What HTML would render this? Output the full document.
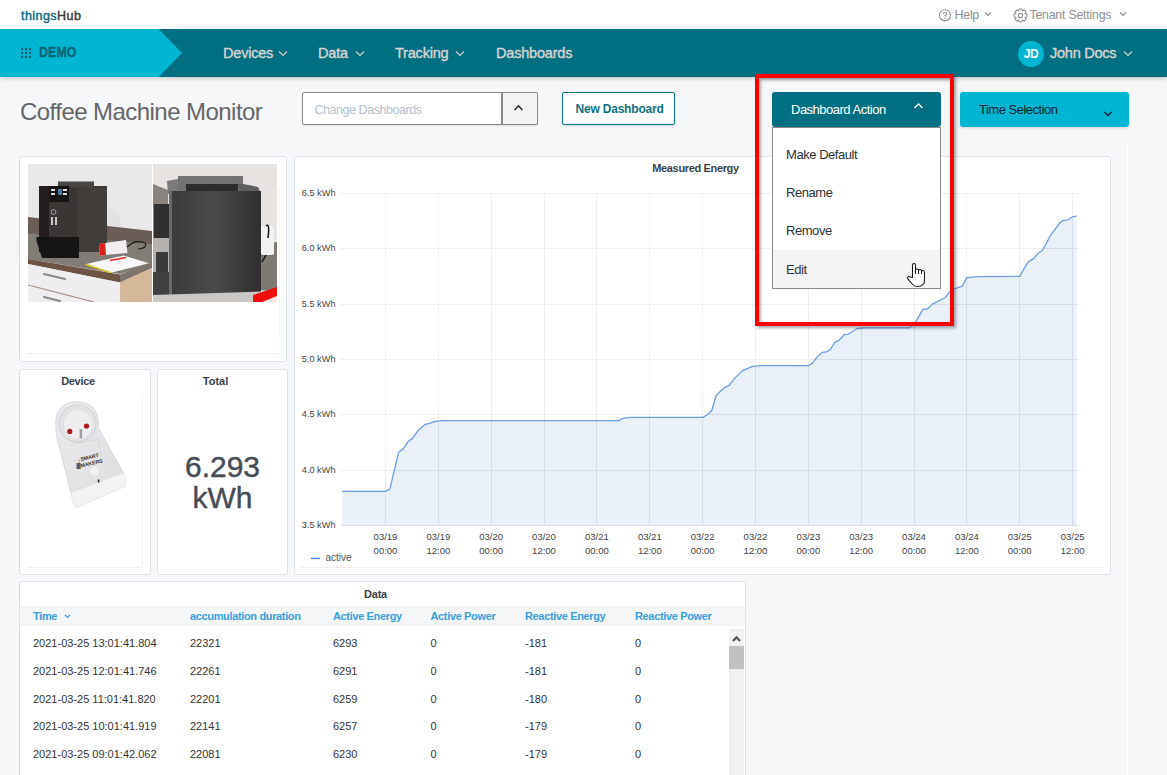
<!DOCTYPE html>
<html><head><meta charset="utf-8">
<style>
*{box-sizing:border-box;margin:0;padding:0}
html,body{width:1167px;height:775px;overflow:hidden}
body{background:#f5f7f9;font-family:"Liberation Sans",sans-serif;position:relative;color:#333}
.abs{position:absolute;white-space:nowrap}
#topbar{position:absolute;left:0;top:0;width:1167px;height:29px;background:#fff}
#nav{position:absolute;left:0;top:29px;width:1167px;height:48px;background:#006f84;box-shadow:0 2px 4px rgba(0,0,0,.17)}
.navtxt{position:absolute;top:0;line-height:48px;font-size:14.5px;color:#d8d6d1;font-weight:400;letter-spacing:-0.2px;-webkit-text-stroke:0.35px #d8d6d1}
.card{position:absolute;background:#fff;border:1px solid #dde2e8;border-radius:3px}
.cardtitle{position:absolute;left:0;right:0;text-align:center;font-size:11px;font-weight:700;color:#3a3f47}
</style></head>
<body>
<!-- top bar -->
<div id="topbar">
  <div class="abs" style="left:21px;top:9px;font-size:12.5px;font-weight:400;letter-spacing:0.45px;line-height:15px;-webkit-text-stroke:0.45px currentColor"><span style="color:#0d6c80">things</span><span style="color:#3c3c3c">Hub</span></div>
  <!-- help -->
  <svg class="abs" style="left:938px;top:9px" width="14" height="13" viewBox="0 0 14 13"><circle cx="7" cy="6.3" r="5.6" fill="none" stroke="#8f8f8f" stroke-width="1.1"/><path d="M5.2 5 Q5.2 3.3 7 3.3 Q8.8 3.3 8.8 4.8 Q8.8 5.8 7.4 6.3 L7 6.7 V7.5" fill="none" stroke="#8f8f8f" stroke-width="1.1"/><circle cx="7" cy="9.2" r="0.7" fill="#8f8f8f"/></svg>
  <div class="abs" style="left:954.5px;top:8px;font-size:12.5px;color:#8f8f8f;line-height:15px;letter-spacing:-0.3px">Help</div>
  <svg class="abs" style="left:984px;top:11px" width="8" height="6" viewBox="0 0 8 6"><path d="M1 1.5 L4 4.5 L7 1.5" fill="none" stroke="#8f8f8f" stroke-width="1.2"/></svg>
  <svg class="abs" style="left:1013px;top:8px" width="15" height="15" viewBox="0 0 15 15"><g fill="none" stroke="#8f8f8f" stroke-width="1.1" stroke-linejoin="round"><path d="M12.09 5.77 L13.94 6.06 L13.94 8.94 L12.09 9.23 L11.96 9.52 L13.07 11.04 L11.04 13.07 L9.52 11.96 L9.23 12.09 L8.94 13.94 L6.06 13.94 L5.77 12.09 L5.48 11.96 L3.96 13.07 L1.93 11.04 L3.04 9.52 L2.91 9.23 L1.06 8.94 L1.06 6.06 L2.91 5.77 L3.04 5.48 L1.93 3.96 L3.96 1.93 L5.48 3.04 L5.77 2.91 L6.06 1.06 L8.94 1.06 L9.23 2.91 L9.52 3.04 L11.04 1.93 L13.07 3.96 L11.96 5.48 Z"/><circle cx="7.5" cy="7.5" r="2.1"/></g></svg>
  <div class="abs" style="left:1029.5px;top:8px;font-size:12.3px;color:#8f8f8f;line-height:15px;letter-spacing:-0.2px">Tenant Settings</div>
  <svg class="abs" style="left:1119px;top:11px" width="8" height="6" viewBox="0 0 8 6"><path d="M1 1.5 L4 4.5 L7 1.5" fill="none" stroke="#8f8f8f" stroke-width="1.2"/></svg>
</div>

<!-- nav -->
<div id="nav">
  <svg class="abs" style="left:0;top:0" width="183" height="48" viewBox="0 0 183 48"><path d="M0 0 H158.5 L182 24 L158.5 48 H0 Z" fill="#00b6d3"/></svg>
  <svg class="abs" style="left:21px;top:19px" width="10" height="10" viewBox="0 0 10 10" fill="#0a6476"><rect x="0" y="0" width="2.2" height="2.2"/><rect x="3.9" y="0" width="2.2" height="2.2"/><rect x="7.8" y="0" width="2.2" height="2.2"/><rect x="0" y="3.9" width="2.2" height="2.2"/><rect x="3.9" y="3.9" width="2.2" height="2.2"/><rect x="7.8" y="3.9" width="2.2" height="2.2"/><rect x="0" y="7.8" width="2.2" height="2.2"/><rect x="3.9" y="7.8" width="2.2" height="2.2"/><rect x="7.8" y="7.8" width="2.2" height="2.2"/></svg>
  <div class="abs" style="left:39px;top:-1px;line-height:48px;font-size:15px;font-weight:700;color:#0a6476;letter-spacing:0.2px;transform:scaleX(0.82);transform-origin:0 0;-webkit-text-stroke:0.3px #0a6476">DEMO</div>
  <div class="navtxt" style="left:223px">Devices</div>
  <svg class="abs" style="left:278px;top:21px" width="10" height="7" viewBox="0 0 10 7"><path d="M1 1.5 L5 5.5 L9 1.5" fill="none" stroke="#cfd6d6" stroke-width="1.1"/></svg>
  <div class="navtxt" style="left:318px">Data</div>
  <svg class="abs" style="left:355px;top:21px" width="10" height="7" viewBox="0 0 10 7"><path d="M1 1.5 L5 5.5 L9 1.5" fill="none" stroke="#cfd6d6" stroke-width="1.1"/></svg>
  <div class="navtxt" style="left:395px">Tracking</div>
  <svg class="abs" style="left:455px;top:21px" width="10" height="7" viewBox="0 0 10 7"><path d="M1 1.5 L5 5.5 L9 1.5" fill="none" stroke="#cfd6d6" stroke-width="1.1"/></svg>
  <div class="navtxt" style="left:496px">Dashboards</div>
  <div class="abs" style="left:1018px;top:12px;width:26px;height:26px;border-radius:50%;background:#00b6d3;color:#fff;font-size:12px;font-weight:700;text-align:center;line-height:26px;letter-spacing:-0.5px">JD</div>
  <div class="navtxt" style="left:1050px;letter-spacing:-0.25px">John Docs</div>
  <svg class="abs" style="left:1123px;top:21px" width="10" height="7" viewBox="0 0 10 7"><path d="M1 1.5 L5 5.5 L9 1.5" fill="none" stroke="#cfd6d6" stroke-width="1.1"/></svg>
</div>

<!-- title row -->
<div class="abs" style="left:20px;top:98px;font-size:24px;color:#666;letter-spacing:-0.55px;line-height:28px">Coffee Machine Monitor</div>

<div class="abs" style="left:302px;top:92px;width:236px;height:33px;border:1px solid #8a8a8a;border-radius:2px;background:#fff;box-shadow:0 1px 2px rgba(0,0,0,.1)"></div>
<div class="abs" style="left:501px;top:92px;width:37px;height:33px;border:1px solid #8a8a8a;border-left:2px solid #8a8a8a;border-radius:0 2px 2px 0;background:#f4f4f4"></div>
<div class="abs" style="left:314.5px;top:102px;font-size:12.5px;color:#b4c0cc;letter-spacing:-0.45px;line-height:16px">Change Dashboards</div>
<svg class="abs" style="left:513px;top:104px" width="11" height="8" viewBox="0 0 11 8"><path d="M1.5 6 L5.5 2 L9.5 6" fill="none" stroke="#333" stroke-width="1.6"/></svg>

<div class="abs" style="left:562px;top:92px;width:113px;height:33px;border:1.5px solid #0c7185;border-radius:2px;background:#fff;box-shadow:0 1px 3px rgba(0,0,0,.12)"></div>
<div class="abs" style="left:575.5px;top:102px;font-size:12px;font-weight:700;color:#0c7185;letter-spacing:-0.2px;line-height:15px">New Dashboard</div>

<!-- time selection -->
<div class="abs" style="left:960px;top:92px;width:169px;height:35px;border-radius:3px;background:#00b6d3;box-shadow:0 1px 3px rgba(0,0,0,.15)"></div>
<div class="abs" style="left:979px;top:102px;font-size:13px;color:#102028;letter-spacing:-0.5px;line-height:15px">Time Selection</div>
<svg class="abs" style="left:1102.5px;top:109.5px" width="10" height="8" viewBox="0 0 10 8"><path d="M1.5 2 L5 5.5 L8.5 2" fill="none" stroke="#102028" stroke-width="1.4"/></svg>

<!-- faint vertical line -->
<div class="abs" style="left:1127px;top:143px;width:1px;height:632px;background:#ffffff"></div>

<!-- CARDS -->
<div class="card" id="imgcard" style="left:19px;top:156px;width:268px;height:206px">
<svg class="abs" style="left:-1px;top:-1px" width="268" height="206" viewBox="19 156 268 206">
<defs>
<linearGradient id="bodyg" x1="0" x2="1" y1="0" y2="0"><stop offset="0" stop-color="#3b3b3b"/><stop offset="0.5" stop-color="#4a4a4a"/><stop offset="1" stop-color="#2f2f2f"/></linearGradient>
<clipPath id="c1"><rect x="28" y="164" width="124" height="138"/></clipPath>
<clipPath id="c2"><rect x="153" y="164" width="124" height="138"/></clipPath>
</defs>
<g clip-path="url(#c1)">
<rect x="28" y="164" width="124" height="138" fill="#e8e8e9"/>
<polygon points="106,205 118,215 122,227 106,226" fill="#dcdcde" opacity="0.5"/>
<polygon points="28,217 152,231 152,246 28,234" fill="#6a5d57"/>
<polygon points="28,234 152,244 152,264 120,274 28,259" fill="#827c77"/>
<polygon points="28,259 120,274.5 120,282.5 28,264" fill="#6d5445"/>
<polygon points="120,274.5 152,262 152,268 120,282.5" fill="#7d746c"/>
<polygon points="28,264 120,282.5 120,302 28,302" fill="#eeedf0"/>
<polygon points="120,282.5 152,268 152,302 120,302" fill="#d3b89c"/>
<path d="M28 285 L94 302" stroke="#a88d80" stroke-width="1.2"/>
<path d="M44 274 L65 279" stroke="#8f8a8c" stroke-width="2.2" stroke-linecap="round"/>
<path d="M44 297 L60 301" stroke="#8f8a8c" stroke-width="2.2" stroke-linecap="round"/>
<polygon points="39,186 107,186 107,252 39,252" fill="#3a3634"/>
<rect x="39" y="186" width="10" height="66" fill="#231f20"/>
<rect x="58" y="181.5" width="36" height="6" fill="#4a4543"/>
<rect x="49" y="186" width="20" height="16" fill="#161414"/>
<rect x="51" y="189" width="4" height="2" fill="#ddd"/>
<rect x="51" y="193" width="4" height="2" fill="#ddd"/>
<rect x="58" y="189" width="4" height="6" fill="#4a78a0"/>
<rect x="63" y="189" width="4" height="2" fill="#ddd"/>
<rect x="63" y="193" width="4" height="2" fill="#ddd"/>
<rect x="77" y="187" width="30" height="65" fill="#403d3b"/>
<circle cx="53.5" cy="212" r="2.4" fill="none" stroke="#bbb" stroke-width="0.8"/>
<rect x="51" y="217" width="2" height="8" fill="#c8c8c8"/>
<rect x="55" y="217" width="2" height="8" fill="#c8c8c8"/>
<polygon points="36.5,237 79,237 79,258 42,258 36.5,241" fill="#161515"/>
<polygon points="99,244 126,240 127.5,253 100,255.5" fill="#f0eeee"/>
<polygon points="99,244 105,243 106,255 100,255.5" fill="#e01d1d"/>
<path d="M127 247 Q136 239 145 243 Q148 248 138 249" fill="none" stroke="#1e1e1e" stroke-width="1.1"/>
<polygon points="86.4,264 123.6,255.4 149,263.3 112,272.4" fill="#f7f7f7"/>
<polygon points="86.4,264 112,272.4 110,273 85,265" fill="#e3d20a"/>
<path d="M110 260.5 L126 257.5" stroke="#e22" stroke-width="1.6"/>
</g>
<rect x="152" y="164" width="1" height="138" fill="#ffffff"/>
<g clip-path="url(#c2)">
<rect x="153" y="164" width="124" height="138" fill="#e6e3e0"/>
<polygon points="153,184 168,190 168,240 153,238" fill="#8a8480"/>
<rect x="153" y="238" width="19" height="36" fill="#b4b1ae"/>
<rect x="156" y="252" width="12" height="20" fill="#3a3a3a"/>
<rect x="154" y="204" width="16" height="34" fill="#303030"/>
<rect x="153" y="272" width="21" height="23" fill="#404040"/>
<polygon points="167,181 183,178 185,192 168,194" fill="#7c7a78"/>
<rect x="178" y="176" width="65" height="16" fill="#757371"/>
<rect x="186" y="184" width="52" height="8" fill="#2d2d2d"/>
<polygon points="238,183 258,187 261,194 240,194" fill="#605e5d"/>
<rect x="169" y="191" width="92" height="104" fill="url(#bodyg)"/>
<rect x="169" y="191" width="3" height="104" fill="#6a6a6a"/>
<polygon points="261,244 277,242 277,292 261,290" fill="#7f7974"/>
<rect x="261" y="226" width="13" height="29" rx="2" fill="#f2f2f2"/>
<path d="M266 255 L262 262 M266 226 Q270 222 268 238" stroke="#111" stroke-width="1.5" fill="none"/>
<polygon points="153,295 277,291 277,302 153,302" fill="#cbc7c4"/>
<polygon points="253,302 253,295 277,287 277,302" fill="#f20d0d"/>
<polygon points="262,302 277,296 277,302" fill="#f3e3e3"/>
</g>
<path d="M279.5 187V336" stroke="#f1f2f4" stroke-width="1"/>
<path d="M27 353.5H279" stroke="#eceef0" stroke-width="1"/>
</svg>
</div>
<div class="card" style="left:19px;top:369px;width:132px;height:206px"><div class="cardtitle" style="top:5px;left:-14px;letter-spacing:-0.3px">Device</div>
<svg class="abs" style="left:-1px;top:-1px" width="132" height="206" viewBox="19 369 132 206">
<defs>
<linearGradient id="plugg" x1="0" x2="1" y1="0" y2="1"><stop offset="0" stop-color="#ececee"/><stop offset="1" stop-color="#dcdcdf"/></linearGradient>
</defs>
<path d="M142.5 397V567.5M27 567.5H142" stroke="#eef0f2" stroke-width="1"/>
<path d="M56 428 Q54 410 66 404 Q78 399 90 405 Q99 411 98.5 428 L124 474 Q127 480 125.5 486 L78 507 Q74.5 508 73.5 503 L56.5 436 Z" fill="url(#plugg)" stroke="#d2d2d6" stroke-width="0.8"/>
<path d="M71 493 L123.5 473 Q127 479 125.5 486 L78 507 Q74.5 508 73.5 503 Z" fill="#f3f3f5"/>
<circle cx="77.5" cy="423.5" r="18.5" fill="#e3e3e6" stroke="#cfcfd3" stroke-width="1"/>
<circle cx="78" cy="424.5" r="14" fill="#eeeef0"/>
<circle cx="69.8" cy="431.4" r="2.6" fill="#a81c1c"/>
<circle cx="86.5" cy="426" r="2.6" fill="#a81c1c"/>
<rect x="79.6" y="429" width="2.6" height="9.5" rx="1.2" fill="#a0a0a4"/>
<path d="M71 444.5 L98.5 439 L101 455 L73.5 461" fill="none" stroke="#d4d4d8" stroke-width="0.7"/>
<polygon points="77,469 79.5,458 81,469" fill="#e0b81a"/>
<rect x="76.5" y="463" width="4" height="6" fill="#5a5a6a"/>
<text x="81" y="461" font-size="5.2" font-weight="700" fill="#333" font-family="Liberation Sans" transform="rotate(-13 81 461)">SMART</text>
<text x="81" y="467.5" font-size="5.2" font-weight="700" fill="#333" font-family="Liberation Sans" transform="rotate(-13 81 467.5)">MAKERS</text>
<circle cx="94.6" cy="471" r="5.3" fill="#f0f0f2" stroke="#d8d8dc" stroke-width="0.6"/>
<rect x="97.8" y="479.5" width="1.6" height="3" fill="#222"/>
</svg>
</div>
<div class="card" style="left:157px;top:369px;width:131px;height:206px"><div class="cardtitle" style="top:5px;left:-14px">Total</div>
  <div class="abs" style="left:0;width:129px;top:81px;text-align:center;font-size:30px;line-height:31px;color:#454c55;font-weight:400;letter-spacing:0px;-webkit-text-stroke:0.4px #454c55">6.293<br>kWh</div>
</div>
<div class="card" id="chartcard" style="left:294px;top:156px;width:817px;height:419px">
<!--CHART-->
<svg class="abs" style="left:-1px;top:-1px" width="817" height="419" viewBox="294 156 817 419">
<path d="M339.5 193.4H1079 M339.5 248.7H1079 M339.5 304.1H1079 M339.5 359.4H1079 M339.5 414.7H1079 M339.5 470.0H1079 M339.5 525.4H1079 M385.5 193.4V525.4 M438.4 193.4V525.4 M491.2 193.4V525.4 M544.0 193.4V525.4 M596.9 193.4V525.4 M649.8 193.4V525.4 M702.6 193.4V525.4 M755.5 193.4V525.4 M808.3 193.4V525.4 M861.2 193.4V525.4 M914.0 193.4V525.4 M966.9 193.4V525.4 M1019.7 193.4V525.4 M1072.6 193.4V525.4" stroke="#efefef" stroke-width="1" fill="none" shape-rendering="crispEdges"/>
<clipPath id="fillclip"><polygon points="342,526 342.0,491.4 385.6,491.4 389.8,489.1 398.6,452.3 402.8,449.4 408.4,441.2 412.3,438.6 418.1,430.5 425.3,424.3 429.5,423.3 435.1,421.4 442.6,420.7 618.4,420.7 624.0,418.1 629.8,417.4 703.1,417.4 708.0,414.2 711.9,410.3 716.0,395.8 720.1,391.4 725.0,387.3 729.4,385.1 734.5,378.4 742.3,370.9 752.4,366.4 760.2,365.7 808.1,365.7 812.5,363.1 817.6,356.4 822.1,352.4 826.6,351.9 830.3,349.5 834.8,342.3 839.3,340.1 844.4,334.5 848.2,334.1 851.5,332.3 857.1,328.5 864.9,327.9 909.4,327.9 916.3,320.9 923.1,309.2 927.1,309.2 932.5,304.1 945.2,297.5 949.7,292.0 954.2,289.0 962.3,286.1 966.8,277.6 977.7,276.7 1019.6,276.3 1028.2,261.9 1033.6,258.6 1038.2,253.2 1041.8,251.0 1045.4,245.1 1050.8,234.8 1059.8,222.9 1063.4,220.3 1068.0,219.8 1072.5,216.7 1076.6,216.2 1076.6,526"/></clipPath>
<polygon points="342,525.4 342.0,491.4 385.6,491.4 389.8,489.1 398.6,452.3 402.8,449.4 408.4,441.2 412.3,438.6 418.1,430.5 425.3,424.3 429.5,423.3 435.1,421.4 442.6,420.7 618.4,420.7 624.0,418.1 629.8,417.4 703.1,417.4 708.0,414.2 711.9,410.3 716.0,395.8 720.1,391.4 725.0,387.3 729.4,385.1 734.5,378.4 742.3,370.9 752.4,366.4 760.2,365.7 808.1,365.7 812.5,363.1 817.6,356.4 822.1,352.4 826.6,351.9 830.3,349.5 834.8,342.3 839.3,340.1 844.4,334.5 848.2,334.1 851.5,332.3 857.1,328.5 864.9,327.9 909.4,327.9 916.3,320.9 923.1,309.2 927.1,309.2 932.5,304.1 945.2,297.5 949.7,292.0 954.2,289.0 962.3,286.1 966.8,277.6 977.7,276.7 1019.6,276.3 1028.2,261.9 1033.6,258.6 1038.2,253.2 1041.8,251.0 1045.4,245.1 1050.8,234.8 1059.8,222.9 1063.4,220.3 1068.0,219.8 1072.5,216.7 1076.6,216.2 1076.6,525.4" fill="rgb(160,187,232)" fill-opacity="0.22"/>
<path clip-path="url(#fillclip)" d="M339.5 193.4H1079 M339.5 248.7H1079 M339.5 304.1H1079 M339.5 359.4H1079 M339.5 414.7H1079 M339.5 470.0H1079 M339.5 525.4H1079 M385.5 193.4V525.4 M438.4 193.4V525.4 M491.2 193.4V525.4 M544.0 193.4V525.4 M596.9 193.4V525.4 M649.8 193.4V525.4 M702.6 193.4V525.4 M755.5 193.4V525.4 M808.3 193.4V525.4 M861.2 193.4V525.4 M914.0 193.4V525.4 M966.9 193.4V525.4 M1019.7 193.4V525.4 M1072.6 193.4V525.4" stroke="#cfd6e2" stroke-opacity="0.55" stroke-width="1" fill="none" shape-rendering="crispEdges"/>
<polyline points="342.0,491.4 385.6,491.4 389.8,489.1 398.6,452.3 402.8,449.4 408.4,441.2 412.3,438.6 418.1,430.5 425.3,424.3 429.5,423.3 435.1,421.4 442.6,420.7 618.4,420.7 624.0,418.1 629.8,417.4 703.1,417.4 708.0,414.2 711.9,410.3 716.0,395.8 720.1,391.4 725.0,387.3 729.4,385.1 734.5,378.4 742.3,370.9 752.4,366.4 760.2,365.7 808.1,365.7 812.5,363.1 817.6,356.4 822.1,352.4 826.6,351.9 830.3,349.5 834.8,342.3 839.3,340.1 844.4,334.5 848.2,334.1 851.5,332.3 857.1,328.5 864.9,327.9 909.4,327.9 916.3,320.9 923.1,309.2 927.1,309.2 932.5,304.1 945.2,297.5 949.7,292.0 954.2,289.0 962.3,286.1 966.8,277.6 977.7,276.7 1019.6,276.3 1028.2,261.9 1033.6,258.6 1038.2,253.2 1041.8,251.0 1045.4,245.1 1050.8,234.8 1059.8,222.9 1063.4,220.3 1068.0,219.8 1072.5,216.7 1076.6,216.2" fill="none" stroke="#6d9de3" stroke-width="1.3" stroke-linejoin="round"/>
<text x="335.5" y="196.0" text-anchor="end" font-size="9.2" fill="#444" font-family="Liberation Sans">6.5 kWh</text>
<text x="335.5" y="251.3" text-anchor="end" font-size="9.2" fill="#444" font-family="Liberation Sans">6.0 kWh</text>
<text x="335.5" y="306.7" text-anchor="end" font-size="9.2" fill="#444" font-family="Liberation Sans">5.5 kWh</text>
<text x="335.5" y="362.0" text-anchor="end" font-size="9.2" fill="#444" font-family="Liberation Sans">5.0 kWh</text>
<text x="335.5" y="417.3" text-anchor="end" font-size="9.2" fill="#444" font-family="Liberation Sans">4.5 kWh</text>
<text x="335.5" y="472.6" text-anchor="end" font-size="9.2" fill="#444" font-family="Liberation Sans">4.0 kWh</text>
<text x="335.5" y="528.0" text-anchor="end" font-size="9.2" fill="#444" font-family="Liberation Sans">3.5 kWh</text>
<text x="385.5" y="540.3" text-anchor="middle" font-size="9.5" fill="#444" font-family="Liberation Sans">03/19</text>
<text x="385.5" y="554.1" text-anchor="middle" font-size="9.5" fill="#444" font-family="Liberation Sans">00:00</text>
<text x="438.4" y="540.3" text-anchor="middle" font-size="9.5" fill="#444" font-family="Liberation Sans">03/19</text>
<text x="438.4" y="554.1" text-anchor="middle" font-size="9.5" fill="#444" font-family="Liberation Sans">12:00</text>
<text x="491.2" y="540.3" text-anchor="middle" font-size="9.5" fill="#444" font-family="Liberation Sans">03/20</text>
<text x="491.2" y="554.1" text-anchor="middle" font-size="9.5" fill="#444" font-family="Liberation Sans">00:00</text>
<text x="544.0" y="540.3" text-anchor="middle" font-size="9.5" fill="#444" font-family="Liberation Sans">03/20</text>
<text x="544.0" y="554.1" text-anchor="middle" font-size="9.5" fill="#444" font-family="Liberation Sans">12:00</text>
<text x="596.9" y="540.3" text-anchor="middle" font-size="9.5" fill="#444" font-family="Liberation Sans">03/21</text>
<text x="596.9" y="554.1" text-anchor="middle" font-size="9.5" fill="#444" font-family="Liberation Sans">00:00</text>
<text x="649.8" y="540.3" text-anchor="middle" font-size="9.5" fill="#444" font-family="Liberation Sans">03/21</text>
<text x="649.8" y="554.1" text-anchor="middle" font-size="9.5" fill="#444" font-family="Liberation Sans">12:00</text>
<text x="702.6" y="540.3" text-anchor="middle" font-size="9.5" fill="#444" font-family="Liberation Sans">03/22</text>
<text x="702.6" y="554.1" text-anchor="middle" font-size="9.5" fill="#444" font-family="Liberation Sans">00:00</text>
<text x="755.5" y="540.3" text-anchor="middle" font-size="9.5" fill="#444" font-family="Liberation Sans">03/22</text>
<text x="755.5" y="554.1" text-anchor="middle" font-size="9.5" fill="#444" font-family="Liberation Sans">12:00</text>
<text x="808.3" y="540.3" text-anchor="middle" font-size="9.5" fill="#444" font-family="Liberation Sans">03/23</text>
<text x="808.3" y="554.1" text-anchor="middle" font-size="9.5" fill="#444" font-family="Liberation Sans">00:00</text>
<text x="861.2" y="540.3" text-anchor="middle" font-size="9.5" fill="#444" font-family="Liberation Sans">03/23</text>
<text x="861.2" y="554.1" text-anchor="middle" font-size="9.5" fill="#444" font-family="Liberation Sans">12:00</text>
<text x="914.0" y="540.3" text-anchor="middle" font-size="9.5" fill="#444" font-family="Liberation Sans">03/24</text>
<text x="914.0" y="554.1" text-anchor="middle" font-size="9.5" fill="#444" font-family="Liberation Sans">00:00</text>
<text x="966.9" y="540.3" text-anchor="middle" font-size="9.5" fill="#444" font-family="Liberation Sans">03/24</text>
<text x="966.9" y="554.1" text-anchor="middle" font-size="9.5" fill="#444" font-family="Liberation Sans">12:00</text>
<text x="1019.7" y="540.3" text-anchor="middle" font-size="9.5" fill="#444" font-family="Liberation Sans">03/25</text>
<text x="1019.7" y="554.1" text-anchor="middle" font-size="9.5" fill="#444" font-family="Liberation Sans">00:00</text>
<text x="1072.6" y="540.3" text-anchor="middle" font-size="9.5" fill="#444" font-family="Liberation Sans">03/25</text>
<text x="1072.6" y="554.1" text-anchor="middle" font-size="9.5" fill="#444" font-family="Liberation Sans">12:00</text>
<path d="M311 558.4H320" stroke="#4a86e8" stroke-width="1.5"/>
<text x="325.5" y="561" font-size="10" fill="#555" font-family="Liberation Sans">active</text>
<path d="M301 567.6H1105" stroke="#eeeeee" stroke-width="1" shape-rendering="crispEdges"/>
<text x="695.5" y="172" text-anchor="middle" font-size="11" font-weight="700" fill="#3a3f47" font-family="Liberation Sans" letter-spacing="-0.35">Measured Energy</text>
</svg>
<!--/CHART-->
</div>
<div class="card" id="datacard" style="left:19px;top:581px;width:727px;height:220px">
<div class="abs" style="left:-7px;top:6px;width:725px;text-align:center;font-size:11px;font-weight:700;color:#3a3f47;line-height:13px;letter-spacing:-0.2px">Data</div>
<div class="abs" style="left:0;top:24px;width:725px;height:20px;background:#f4f6f8"></div>
<div class="abs" style="left:13px;top:28px;font-size:11px;font-weight:700;color:#3b9fde;line-height:13px;letter-spacing:-0.35px">Time</div>
<div class="abs" style="left:170px;top:28px;font-size:11px;font-weight:700;color:#3b9fde;line-height:13px;letter-spacing:-0.35px">accumulation duration</div>
<div class="abs" style="left:313px;top:28px;font-size:11px;font-weight:700;color:#3b9fde;line-height:13px;letter-spacing:-0.35px">Active Energy</div>
<div class="abs" style="left:410.5px;top:28px;font-size:11px;font-weight:700;color:#3b9fde;line-height:13px;letter-spacing:-0.35px">Active Power</div>
<div class="abs" style="left:505px;top:28px;font-size:11px;font-weight:700;color:#3b9fde;line-height:13px;letter-spacing:-0.35px">Reactive Energy</div>
<div class="abs" style="left:615px;top:28px;font-size:11px;font-weight:700;color:#3b9fde;line-height:13px;letter-spacing:-0.35px">Reactive Power</div>
<svg class="abs" style="left:44px;top:32px" width="7" height="5" viewBox="0 0 7 5"><path d="M1 1 L3.5 3.5 L6 1" fill="none" stroke="#3b9fde" stroke-width="1.2"/></svg>
<div class="abs" style="left:13px;top:55.2px;font-size:11px;color:#333;line-height:13px">2021-03-25 13:01:41.804</div>
<div class="abs" style="left:170px;top:55.2px;font-size:11px;color:#333;line-height:13px">22321</div>
<div class="abs" style="left:313px;top:55.2px;font-size:11px;color:#333;line-height:13px">6293</div>
<div class="abs" style="left:410.5px;top:55.2px;font-size:11px;color:#333;line-height:13px">0</div>
<div class="abs" style="left:505px;top:55.2px;font-size:11px;color:#333;line-height:13px">-181</div>
<div class="abs" style="left:615px;top:55.2px;font-size:11px;color:#333;line-height:13px">0</div>
<div class="abs" style="left:13px;top:82.9px;font-size:11px;color:#333;line-height:13px">2021-03-25 12:01:41.746</div>
<div class="abs" style="left:170px;top:82.9px;font-size:11px;color:#333;line-height:13px">22261</div>
<div class="abs" style="left:313px;top:82.9px;font-size:11px;color:#333;line-height:13px">6291</div>
<div class="abs" style="left:410.5px;top:82.9px;font-size:11px;color:#333;line-height:13px">0</div>
<div class="abs" style="left:505px;top:82.9px;font-size:11px;color:#333;line-height:13px">-181</div>
<div class="abs" style="left:615px;top:82.9px;font-size:11px;color:#333;line-height:13px">0</div>
<div class="abs" style="left:13px;top:110.6px;font-size:11px;color:#333;line-height:13px">2021-03-25 11:01:41.820</div>
<div class="abs" style="left:170px;top:110.6px;font-size:11px;color:#333;line-height:13px">22201</div>
<div class="abs" style="left:313px;top:110.6px;font-size:11px;color:#333;line-height:13px">6259</div>
<div class="abs" style="left:410.5px;top:110.6px;font-size:11px;color:#333;line-height:13px">0</div>
<div class="abs" style="left:505px;top:110.6px;font-size:11px;color:#333;line-height:13px">-180</div>
<div class="abs" style="left:615px;top:110.6px;font-size:11px;color:#333;line-height:13px">0</div>
<div class="abs" style="left:13px;top:138.3px;font-size:11px;color:#333;line-height:13px">2021-03-25 10:01:41.919</div>
<div class="abs" style="left:170px;top:138.3px;font-size:11px;color:#333;line-height:13px">22141</div>
<div class="abs" style="left:313px;top:138.3px;font-size:11px;color:#333;line-height:13px">6257</div>
<div class="abs" style="left:410.5px;top:138.3px;font-size:11px;color:#333;line-height:13px">0</div>
<div class="abs" style="left:505px;top:138.3px;font-size:11px;color:#333;line-height:13px">-179</div>
<div class="abs" style="left:615px;top:138.3px;font-size:11px;color:#333;line-height:13px">0</div>
<div class="abs" style="left:13px;top:166.0px;font-size:11px;color:#333;line-height:13px">2021-03-25 09:01:42.062</div>
<div class="abs" style="left:170px;top:166.0px;font-size:11px;color:#333;line-height:13px">22081</div>
<div class="abs" style="left:313px;top:166.0px;font-size:11px;color:#333;line-height:13px">6230</div>
<div class="abs" style="left:410.5px;top:166.0px;font-size:11px;color:#333;line-height:13px">0</div>
<div class="abs" style="left:505px;top:166.0px;font-size:11px;color:#333;line-height:13px">-179</div>
<div class="abs" style="left:615px;top:166.0px;font-size:11px;color:#333;line-height:13px">0</div>
<div class="abs" style="left:709px;top:47px;width:15px;height:200px;background:#f1f1f1"></div>
<div class="abs" style="left:709px;top:64px;width:15px;height:23px;background:#c1c1c1"></div>
<svg class="abs" style="left:712px;top:53px" width="9" height="7" viewBox="0 0 9 7"><path d="M1 6 L4.5 2.2 L8 6" fill="none" stroke="#505050" stroke-width="2"/></svg>
</div>

<!-- DROPDOWN (on top) -->
<div class="abs" style="left:772px;top:92px;width:169px;height:34.5px;border-radius:3px;background:#006f84"></div>
<div class="abs" style="left:791px;top:102px;font-size:13px;color:#fff;letter-spacing:-0.5px;line-height:15px">Dashboard Action</div>
<svg class="abs" style="left:913px;top:102px" width="11" height="8" viewBox="0 0 11 8"><path d="M1.5 6 L5.5 2 L9.5 6" fill="none" stroke="#fff" stroke-width="1.3"/></svg>
<div class="abs" style="left:772px;top:127px;width:169px;height:162px;background:#fff;border:1px solid #8a8a8a"></div>
<div class="abs" style="left:773px;top:250px;width:167px;height:38px;background:#f4f4f4"></div>
<div class="abs" style="left:786px;top:147px;font-size:13px;color:#2d3338;letter-spacing:-0.45px;line-height:15px">Make Default</div>
<div class="abs" style="left:786px;top:185px;font-size:13px;color:#2d3338;letter-spacing:-0.45px;line-height:15px">Rename</div>
<div class="abs" style="left:786px;top:223px;font-size:13px;color:#2d3338;letter-spacing:-0.45px;line-height:15px">Remove</div>
<div class="abs" style="left:786px;top:262px;font-size:13px;color:#2d3338;letter-spacing:-0.45px;line-height:15px">Edit</div>

<svg class="abs" style="left:906px;top:262px" width="21" height="27" viewBox="0 0 21 27"><path d="M6.5 15.5 V3 Q6.5 1.5 8 1.5 Q9.5 1.5 9.5 3 V8.5 Q9.5 7 11 7 Q12.5 7 12.5 8.5 V9 Q12.5 7.5 14 7.5 Q15.5 7.5 15.5 9 V10 Q15.5 8.5 17 8.5 Q18.5 8.5 18.5 10.5 V18.5 Q18.5 24.5 11.2 24.5 Q8.2 24.5 6.2 22 L2 17.2 Q1 15.9 1.9 15 Q3.1 14 4.6 15.1 Z" fill="#fff" stroke="#15151a" stroke-width="1.05" stroke-linejoin="round"/><path d="M9.5 8.5 V12 M12.5 9 V12 M15.5 10 V12" stroke="#15151a" stroke-width="1" fill="none"/></svg>
<!-- red highlight box -->
<div class="abs" style="left:755px;top:74px;width:199px;height:252px;border:4px solid #f00;box-shadow:2px 2px 3px rgba(0,0,0,.35), inset 2px 2px 3px rgba(0,0,0,.3)"></div>

</body></html>
